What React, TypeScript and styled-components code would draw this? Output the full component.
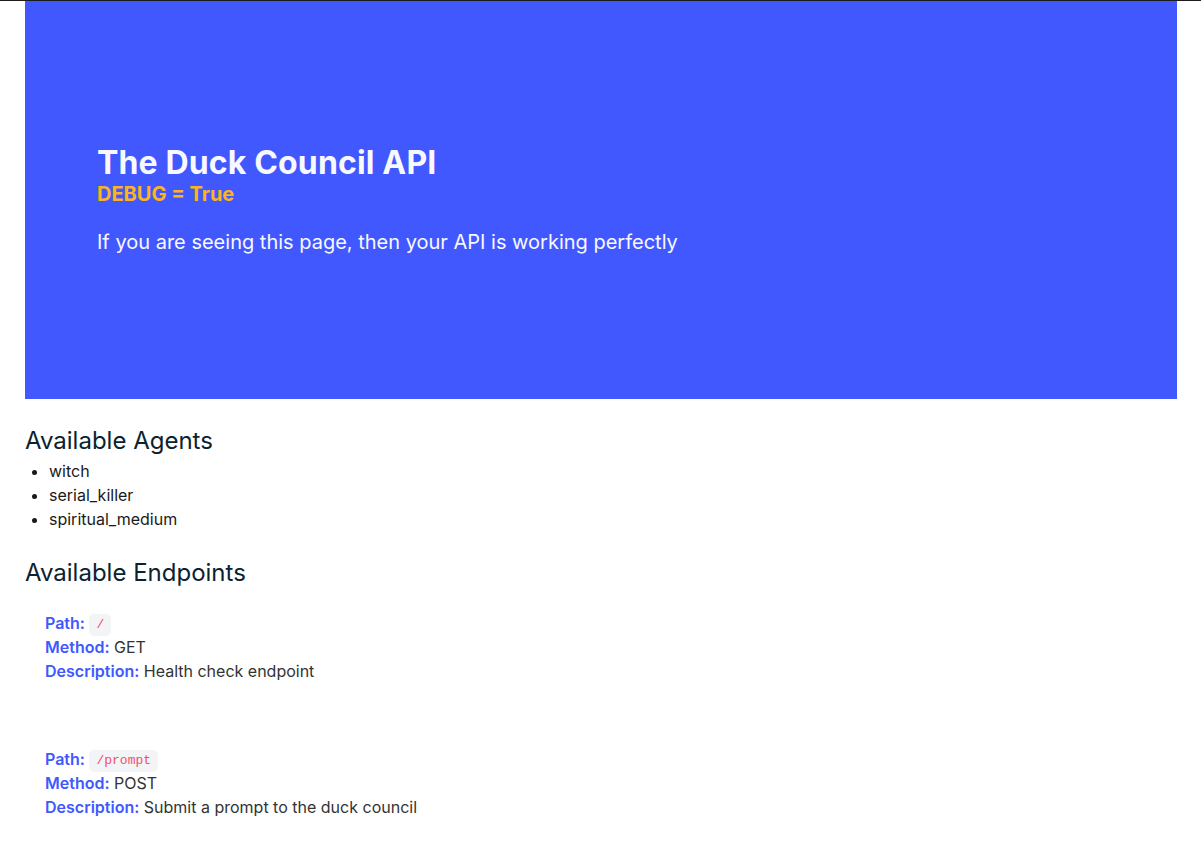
import styled, { createGlobalStyle } from 'styled-components';

const GlobalStyle = createGlobalStyle`
  html, body { margin: 0; padding: 0; }
  body {
    border-top: 1px solid #1c1c1c;
    background: #fff;
    font-family: Inter, 'Noto Sans', sans-serif;
    color: #1a1a1a;
  }
`;

const Page = styled.main`
  padding: 0 24px 0 25px;
`;

const Hero = styled.header`
  height: 398px;
  background: #4158ff;
  display: flex;
  flex-direction: column;
  justify-content: center;
  padding-left: 72px;
`;

const Title = styled.h1`
  margin: 0;
  font-size: 32px;
  line-height: 38px;
  font-weight: 700;
  letter-spacing: 0.15px;
  color: #f8f8ff;
`;

const Debug = styled.div`
  font-size: 20px;
  line-height: 24px;
  font-weight: 700;
  color: #fbb324;
`;

const Lead = styled.p`
  margin: 21px 0 0;
  font-size: 20px;
  line-height: 30px;
  color: #f8f8ff;
`;

const SectionTitle = styled.h2`
  margin: 27px 0 4px;
  font-size: 24px;
  line-height: 29px;
  font-weight: 400;
  color: #0b2230;
`;

const AgentList = styled.ul`
  margin: 0;
  padding-left: 24px;
  font-size: 16px;
  line-height: 24px;
  color: #1a1a1a;
`;

const Endpoints = styled.div`
  display: flex;
  flex-direction: column;
  gap: 64px;
  margin-top: 24px;
  padding: 0 20px;
`;

const Endpoint = styled.div`
  font-size: 16px;
  line-height: 24px;
  color: #333;
`;

const Label = styled.span`
  font-weight: 600;
  color: #4158ff;
`;

const Code = styled.code`
  display: inline-block;
  font-family: 'Liberation Mono', 'DejaVu Sans Mono', monospace;
  font-size: 13px;
  line-height: 22px;
  padding: 0 7px;
  margin: -2px 0;
  border-radius: 5px;
  background: #f3f4f6;
  color: #f0506e;
  vertical-align: middle;
`;

const agents = ['witch', 'serial_killer', 'spiritual_medium'];

const endpoints = [
  { path: '/', method: 'GET', description: 'Health check endpoint' },
  { path: '/prompt', method: 'POST', description: 'Submit a prompt to the duck council' },
];

export default function App() {
  return (
    <Page>
      <GlobalStyle />
      <Hero>
        <Title>The Duck Council API</Title>
        <Debug>DEBUG = True</Debug>
        <Lead>If you are seeing this page, then your API is working perfectly</Lead>
      </Hero>

      <SectionTitle>Available Agents</SectionTitle>
      <AgentList>
        {agents.map((a) => (
          <li key={a}>{a}</li>
        ))}
      </AgentList>

      <SectionTitle>Available Endpoints</SectionTitle>
      <Endpoints>
        {endpoints.map((e) => (
          <Endpoint key={e.path}>
            <div>
              <Label>Path:</Label> <Code>{e.path}</Code>
            </div>
            <div>
              <Label>Method:</Label> {e.method}
            </div>
            <div>
              <Label>Description:</Label> {e.description}
            </div>
          </Endpoint>
        ))}
      </Endpoints>
    </Page>
  );
}
